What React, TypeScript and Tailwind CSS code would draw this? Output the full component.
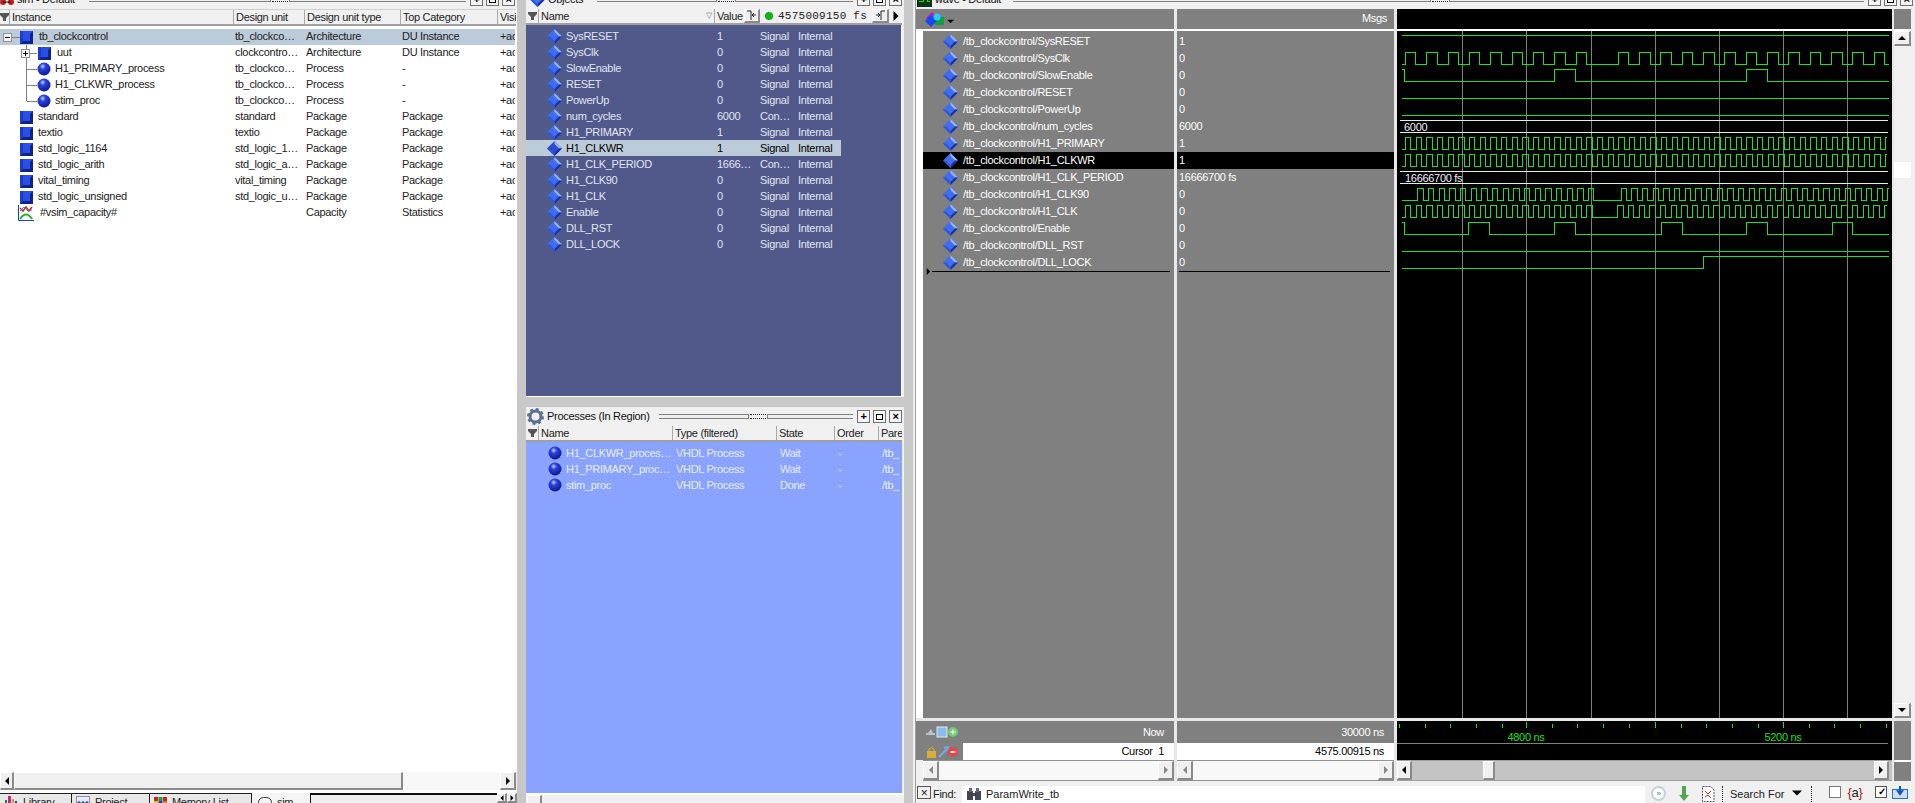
import React from 'react';

const FONT = 'font-["Liberation_Sans",sans-serif] tracking-[-0.3px]';

function Diamond({ dark = false }: { dark?: boolean }) {
  return (
    <svg width="15" height="15" viewBox="0 0 15 15" className="shrink-0">
      <polygon points="7.5,0 15,7.5 7.5,15 0,7.5" fill={dark ? '#2a4bd0' : '#3f6ff0'} />
      <polygon points="7.5,0 15,7.5 12,7.5 7.5,3" fill="#9db4f5" />
      <polygon points="15,7.5 7.5,15 7.5,12 12,7.5" fill="#1c2f9e" />
      <polygon points="0,7.5 7.5,15 7.5,12 3,7.5" fill="#2f55d8" />
    </svg>
  );
}

function Sphere() {
  return (
    <svg width="14" height="14" viewBox="0 0 14 14" className="shrink-0">
      <defs>
        <radialGradient id="ball" cx="0.4" cy="0.3" r="0.75">
          <stop offset="0" stopColor="#c8d4ff" />
          <stop offset="0.3" stopColor="#2a44e0" />
          <stop offset="1" stopColor="#0a1480" />
        </radialGradient>
      </defs>
      <circle cx="7" cy="7" r="6.5" fill="url(#ball)" />
    </svg>
  );
}

function BlueSquare() {
  return (
    <svg width="13" height="13" viewBox="0 0 13 13" className="shrink-0">
      <rect width="13" height="13" fill="#2850e8" />
      <polygon points="0,13 3,10 10,10 10,3 13,0 13,13" fill="#0f2288" />
      <polygon points="0,0 3,0 3,10 0,13" fill="#1c3cc4" />
    </svg>
  );
}

function CapacityIcon() {
  return (
    <svg width="16" height="16" viewBox="0 0 16 16" className="shrink-0">
      <path d="M0.5 0 V15.5 H16" stroke="#1a3fc0" fill="none" />
      <path d="M2 3 L5 6 L8 2 L11 6 L14 2" stroke="#e02020" strokeWidth="1.5" fill="none" />
      <path d="M2 6 L6 2 L10 6 L14 5" stroke="#20a0c0" fill="none" />
      <path d="M2 14 Q8 5 14 14" stroke="#30b030" strokeWidth="2" fill="none" />
    </svg>
  );
}

// tree connector + expand box in the instance column
function Gutter({ width, box, line, lastLine }: { width: number; box?: [number, string]; line?: boolean; lastLine?: boolean }) {
  return (
    <svg width={width} height="16" viewBox={`0 0 ${width} 16`} shapeRendering="crispEdges" className="shrink-0">
      {line && <path d={`M26.5 0 V${lastLine ? 8 : 16} M26.5 8.5 H37`} stroke="#808080" />}
      {box && (
        <g>
          {box[1] !== 'root' && <path d="M26.5 0 V16 M26.5 8.5 H37" stroke="#808080" />}
          {box[1] === 'root' && <path d="M12 8.5 H20" stroke="#808080" />}
          <rect x={box[0] + 0.5} y="4.5" width="8" height="8" fill="#f4f4f4" stroke="#909090" />
          <path d={`M${box[0] + 2} 8.5 H${box[0] + 7}`} stroke="#000" />
          {box[1] !== 'root' && <path d={`M${box[0] + 4.5} 6 V11`} stroke="#000" />}
        </g>
      )}
    </svg>
  );
}

function Tri({ dir, color = '#000', size = 8 }: { dir: 'l' | 'r' | 'u' | 'd'; color?: string; size?: number }) {
  const pts = { l: '6,0 6,8 2,4', r: '2,0 2,8 6,4', u: '0,6 8,6 4,2', d: '0,2 8,2 4,6' }[dir];
  return (
    <svg width={size} height={size} viewBox="0 0 8 8" className="shrink-0">
      <polygon points={pts} fill={color} />
    </svg>
  );
}

function WinBtn({ children }: { children: React.ReactNode }) {
  return (
    <div className="w-[13px] h-[13px] shrink-0 border border-[#707070] bg-[#f4f4f4] flex items-center justify-center text-[11px] leading-none font-bold text-black">
      {children}
    </div>
  );
}

function TitleBar({ icon, title, height, firstLine, secondLine }: { icon: React.ReactNode; title: string; height: string; firstLine: string; secondLine: string }) {
  return (
    <div className={`${height} shrink-0 overflow-hidden flex items-end bg-[#f0f0f0]`}>
      <div className="h-[19px] w-full shrink-0 flex items-center text-[11px] text-[#111]">
        {icon}
        <span className="ml-[3px] whitespace-pre">{title}</span>
        <div className={`${firstLine} h-[5px] border-y border-[#808080] border-r ml-auto`} />
        <div className="w-[16px] mx-[1px] h-[5px] border-y border-dotted border-[#222]" />
        <div className={`${secondLine} h-[5px] border-y border-[#808080] border-l`} />
        <div className="flex gap-[3px] ml-[4px] mr-[2px]">
          <WinBtn>+</WinBtn>
          <WinBtn>
            <span className="block w-[7px] h-[6px] border border-black" />
          </WinBtn>
          <WinBtn>×</WinBtn>
        </div>
      </div>
    </div>
  );
}

function Btn({ className, children }: { className: string; children?: React.ReactNode }) {
  return (
    <div className={`${className} shrink-0 flex items-center justify-center bg-[#f0f0f0] border-t border-l border-t-white border-l-white border-b-2 border-r-2 border-b-[#8a8a8a] border-r-[#8a8a8a]`}>
      {children}
    </div>
  );
}

function HeaderCell({ w, children }: { w: string; children: React.ReactNode }) {
  return (
    <div className={`${w} shrink-0 h-full flex items-center overflow-hidden whitespace-nowrap pl-[2px] border-l border-[#a8a8a8]`}>
      {children}
    </div>
  );
}

function Collapse({ className }: { className: string }) {
  return (
    <div className={`${className} shrink-0 flex justify-center`}>
      <svg width="9" height="8" viewBox="0 0 9 8">
        <polygon points="0,0 9,0 9,2 6,5 6,8 3,8 3,5 0,2" fill="#555" />
      </svg>
    </div>
  );
}

const instances = [
  { name: 'tb_clockcontrol', unit: 'tb_clockco…', type: 'Architecture', cat: 'DU Instance', kind: 'root' },
  { name: 'uut', unit: 'clockcontro…', type: 'Architecture', cat: 'DU Instance', kind: 'child' },
  { name: 'H1_PRIMARY_process', unit: 'tb_clockco…', type: 'Process', cat: '-', kind: 'proc' },
  { name: 'H1_CLKWR_process', unit: 'tb_clockco…', type: 'Process', cat: '-', kind: 'proc' },
  { name: 'stim_proc', unit: 'tb_clockco…', type: 'Process', cat: '-', kind: 'last' },
  { name: 'standard', unit: 'standard', type: 'Package', cat: 'Package', kind: 'pkg' },
  { name: 'textio', unit: 'textio', type: 'Package', cat: 'Package', kind: 'pkg' },
  { name: 'std_logic_1164', unit: 'std_logic_1…', type: 'Package', cat: 'Package', kind: 'pkg' },
  { name: 'std_logic_arith', unit: 'std_logic_a…', type: 'Package', cat: 'Package', kind: 'pkg' },
  { name: 'vital_timing', unit: 'vital_timing', type: 'Package', cat: 'Package', kind: 'pkg' },
  { name: 'std_logic_unsigned', unit: 'std_logic_u…', type: 'Package', cat: 'Package', kind: 'pkg' },
  { name: '#vsim_capacity#', unit: '', type: 'Capacity', cat: 'Statistics', kind: 'cap' },
];

function InstanceName({ kind, name }: { kind: string; name: string }) {
  if (kind === 'root')
    return (
      <>
        <Gutter width={20} box={[3, 'root']} />
        <BlueSquare />
        <span className="ml-[6px] mb-[2px]">{name}</span>
      </>
    );
  if (kind === 'child')
    return (
      <>
        <Gutter width={38} box={[21, 'plus']} />
        <BlueSquare />
        <span className="ml-[6px] mb-[2px]">{name}</span>
      </>
    );
  if (kind === 'proc' || kind === 'last')
    return (
      <>
        <Gutter width={37} line lastLine={kind === 'last'} />
        <Sphere />
        <span className="ml-[4px] mb-[2px]">{name}</span>
      </>
    );
  if (kind === 'cap')
    return (
      <>
        <div className="w-[18px] shrink-0" />
        <CapacityIcon />
        <span className="ml-[6px] mb-[2px]">{name}</span>
      </>
    );
  return (
    <>
      <div className="w-[20px] shrink-0" />
      <BlueSquare />
      <span className="ml-[5px] mb-[2px]">{name}</span>
    </>
  );
}

function TabIcon({ name }: { name: string }) {
  if (name === 'Library')
    return (
      <svg width="14" height="13" viewBox="0 0 14 13" className="shrink-0">
        <rect x="1" y="4" width="2" height="9" fill="#208040" />
        <rect x="4" y="0" width="3" height="13" fill="#d02090" />
        <rect x="8" y="3" width="2" height="10" fill="#d0a020" />
        <rect x="11" y="5" width="2" height="8" fill="#2040c0" />
      </svg>
    );
  if (name === 'Project')
    return (
      <svg width="14" height="13" viewBox="0 0 14 13" className="shrink-0">
        <rect x=".5" y=".5" width="13" height="12" fill="#e8ecff" stroke="#333" strokeDasharray="1 1" />
        <path d="M3 5 V9 M1 7 H5 M7 5 V9 M5 7 H9 M11 5 V9 M9 7 H13" stroke="#1020a0" />
      </svg>
    );
  return (
    <svg width="13" height="12" viewBox="0 0 13 12" className="shrink-0">
      <rect x="0" y="0" width="4" height="4" fill="#d02020" />
      <rect x="4.5" y="0" width="4" height="4" fill="#20a040" />
      <rect x="9" y="0" width="4" height="4" fill="#d02020" />
      <rect x="0" y="4" width="4" height="4" fill="#e8c820" />
      <rect x="4.5" y="4" width="4" height="4" fill="#2040d0" />
      <rect x="9" y="4" width="4" height="4" fill="#e08020" />
      <rect x="0" y="8" width="13" height="4" fill="#405080" />
    </svg>
  );
}

function SimPanel() {
  return (
    <div className="w-[517px] shrink-0 flex flex-col bg-white">
      <TitleBar
        height="h-[9px]"
        title="sim - Default"
        firstLine="w-[182px]"
        secondLine="w-[177px]"
        icon={
          <svg width="14" height="10" viewBox="0 0 14 10" className="shrink-0">
            <circle cx="3" cy="7" r="3" fill="#c02020" />
            <circle cx="11" cy="7" r="3" fill="#c02020" />
            <path d="M3 7 H11" stroke="#111" />
          </svg>
        }
      />
      <div className="h-[17px] shrink-0 flex items-center text-[11px] text-[#222] bg-[#f0f0f0] border-t border-b-2 border-t-[#d0d0d0] border-b-[#a0a0a0] mr-[1px]">
        <Collapse className="w-[9px]" />
        <HeaderCell w="w-[224px]">Instance</HeaderCell>
        <HeaderCell w="w-[71px]">Design unit</HeaderCell>
        <HeaderCell w="w-[96px]">Design unit type</HeaderCell>
        <HeaderCell w="w-[97px]">Top Category</HeaderCell>
        <HeaderCell w="w-[19px]">Visil</HeaderCell>
      </div>
      <div className="flex-1 min-h-0 pt-[3px] text-[11px] text-[#222] overflow-hidden">
        {instances.map((r, i) => (
          <div key={r.name} className={`h-[16px] flex items-center whitespace-nowrap w-[515px] ${i === 0 ? 'bg-[#bccbd9]' : ''}`}>
            <div className="w-[235px] shrink-0 flex items-center h-full">
              <InstanceName kind={r.kind} name={r.name} />
            </div>
            <div className="w-[71px] shrink-0 pb-[2px]">{r.unit}</div>
            <div className="w-[96px] shrink-0 pb-[2px]">{r.type}</div>
            <div className="w-[98px] shrink-0 pb-[2px]">{r.cat}</div>
            <div className="w-[15px] shrink-0 overflow-hidden pb-[2px]">+acc</div>
          </div>
        ))}
      </div>
      <div className="h-[18px] shrink-0 flex bg-[#f0f0f0] mb-[3px]">
        <Btn className="w-[14px] h-full"><Tri dir="l" /></Btn>
        <Btn className="w-[389px] h-full" />
        <div className="w-[97px] bg-[#f8f8f8]" />
        <Btn className="w-[16px] h-full"><Tri dir="r" /></Btn>
      </div>
      <div className="h-[10px] shrink-0 overflow-hidden flex items-start bg-[#f0f0f0] text-[11px] text-[#222]">
        {[
          { t: 'Library', w: 'w-[72px]' },
          { t: 'Project', w: 'w-[78px]' },
          { t: 'Memory List', w: 'w-[102px]' },
        ].map((tab) => (
          <div key={tab.t} className={`${tab.w} h-[18px] shrink-0 flex items-center gap-[5px] pl-[4px] border-t border-r border-[#222] bg-[#e8e8e8] whitespace-nowrap`}>
            <TabIcon name={tab.t} />
            {tab.t}
          </div>
        ))}
        <div className="w-[58px] h-[18px] shrink-0 flex items-center gap-[5px] pl-[6px] bg-[#f4f4f4]">
          <span className="w-[14px] h-[11px] block border border-[#333] rounded-md" />
          sim
        </div>
        <div className="w-[187px] h-full border-t-2 border-l border-[#111] bg-[#f0f0f0]" />
        <Btn className="w-[10px] h-full"><Tri dir="l" size={6} /></Btn>
        <Btn className="w-[10px] h-full"><Tri dir="r" size={6} /></Btn>
      </div>
    </div>
  );
}

const objects = [
  ['SysRESET', '1', 'Signal'],
  ['SysClk', '0', 'Signal'],
  ['SlowEnable', '0', 'Signal'],
  ['RESET', '0', 'Signal'],
  ['PowerUp', '0', 'Signal'],
  ['num_cycles', '6000', 'Con…'],
  ['H1_PRIMARY', '1', 'Signal'],
  ['H1_CLKWR', '1', 'Signal'],
  ['H1_CLK_PERIOD', '1666…', 'Con…'],
  ['H1_CLK90', '0', 'Signal'],
  ['H1_CLK', '0', 'Signal'],
  ['Enable', '0', 'Signal'],
  ['DLL_RST', '0', 'Signal'],
  ['DLL_LOCK', '0', 'Signal'],
];

const processes = [
  ['H1_CLKWR_proces…', 'Wait'],
  ['H1_PRIMARY_proc…', 'Wait'],
  ['stim_proc', 'Done'],
];

function CenterPanels() {
  return (
    <div className="w-[378px] shrink-0 flex flex-col bg-[#f0f0f0]">
      <TitleBar
        height="h-[9px]"
        title="Objects"
        firstLine="w-[120px]"
        secondLine="w-[118px]"
        icon={
          <div className="ml-[4px] shrink-0">
            <Diamond />
          </div>
        }
      />
      <div className="h-[16px] shrink-0 flex items-center text-[11px] text-[#222] border-b-2 border-[#a0a0a0] w-[376px]">
        <Collapse className="w-[11px] ml-[1px]" />
        <HeaderCell w="w-[176px]">
          <span className="flex-1">Name</span>
          <span className="text-[8px] text-[#777] mr-[2px]">▽</span>
        </HeaderCell>
        <HeaderCell w="w-[30px]">Value</HeaderCell>
        <Btn className="w-[16px] h-[14px]">
          <svg width="11" height="11" viewBox="0 0 11 11"><path d="M1 1 H5 V10 M10 5 H6 M6 5 L8 3 M6 5 L8 7" stroke="#222" fill="none" /></svg>
        </Btn>
        <div className="w-[112px] shrink-0 flex items-center pl-[5px] gap-[5px] font-['Liberation_Mono',monospace] text-[#222] text-[11px] tracking-[0.25px] whitespace-pre overflow-hidden">
          <span className="w-[8px] h-[8px] rounded-full bg-[#12b012] shrink-0" />
          4575009150 fs
        </div>
        <Btn className="w-[17px] h-[14px]">
          <svg width="11" height="11" viewBox="0 0 11 11"><path d="M10 1 H6 V10 M1 5 H5 M5 5 L3 3 M5 5 L3 7" stroke="#222" fill="none" /></svg>
        </Btn>
        <div className="ml-[2px]"><Tri dir="r" size={10} /></div>
      </div>
      <div className="h-[372px] shrink-0 w-[376px] bg-[#50598a] border-b border-r border-white text-[11px] text-[#e2e5f2] pt-[3px] overflow-hidden">
        {objects.map((o) => {
          const sel = o[0] === 'H1_CLKWR';
          return (
            <div key={o[0]} className={`h-[16px] w-[315px] flex items-center whitespace-nowrap ${sel ? 'bg-[#bccbd9] text-black' : ''}`}>
              <div className="w-[21px] shrink-0" />
              <Diamond dark={sel} />
              <span className="ml-[4px] w-[151px] shrink-0">{o[0]}</span>
              <span className="w-[43px] shrink-0">{o[1]}</span>
              <span className="w-[38px] shrink-0">{o[2]}</span>
              <span>Internal</span>
            </div>
          );
        })}
      </div>
      <div className="h-[10px] shrink-0 bg-[#c8c8c8]" />
      <TitleBar
        height="h-[19px]"
        title="Processes (In Region)"
        firstLine="w-[90px]"
        secondLine="w-[86px]"
        icon={
          <svg width="17" height="17" viewBox="0 0 17 17" className="ml-[1px] shrink-0">
            <circle cx="8.5" cy="8.5" r="5.5" fill="none" stroke="#5a7090" strokeWidth="3" />
            <circle cx="8.5" cy="8.5" r="7.5" fill="none" stroke="#5a7090" strokeWidth="2" strokeDasharray="3 2.9" />
          </svg>
        }
      />
      <div className="h-[16px] shrink-0 flex items-center text-[11px] text-[#222] border-b-2 border-[#a0a0a0] w-[376px]">
        <Collapse className="w-[11px] ml-[1px]" />
        <HeaderCell w="w-[134px]">Name</HeaderCell>
        <HeaderCell w="w-[104px]">Type (filtered)</HeaderCell>
        <HeaderCell w="w-[58px]">State</HeaderCell>
        <HeaderCell w="w-[44px]">Order</HeaderCell>
        <HeaderCell w="w-[24px]">Pare</HeaderCell>
      </div>
      <div className="flex-1 min-h-0 w-[376px] bg-[#8aa3fe] text-[11px] text-[#e8edff] pt-[3px]">
        {processes.map((p) => (
          <div key={p[0]} className="h-[16px] flex items-center whitespace-nowrap overflow-hidden">
            <div className="w-[22px] shrink-0" />
            <Sphere />
            <span className="ml-[4px] w-[110px] shrink-0 overflow-hidden">{p[0]}</span>
            <span className="w-[104px] shrink-0">VHDL Process</span>
            <span className="w-[58px] shrink-0">{p[1]}</span>
            <span className="w-[44px] shrink-0">-</span>
            <span>/tb_</span>
          </div>
        ))}
      </div>
      <div className="h-[10px] shrink-0 border-t-2 border-white overflow-hidden">
        <Btn className="w-[15px] h-[14px] ml-[1px]" />
      </div>
    </div>
  );
}

const waveNames = ['SysRESET', 'SysClk', 'SlowEnable', 'RESET', 'PowerUp', 'num_cycles', 'H1_PRIMARY', 'H1_CLKWR', 'H1_CLK_PERIOD', 'H1_CLK90', 'H1_CLK', 'Enable', 'DLL_RST', 'DLL_LOCK'];
const waveValues = ['1', '0', '0', '0', '0', '6000', '1', '1', '16666700 fs', '0', '0', '0', '0', '0'];

// positions below were read off a 3x crop, so they're in crop units
type Range = [number, number];
const clk = (start: number, period: number, width: number, count: number): Range[] =>
  Array.from({ length: count }, (_, k): Range => [start + k * period, start + k * period + width]);
const px = (z: number) => Math.round(z / 3 - 2) + 0.5;

function trace(highs: Range[], hi: number, lo: number, end = 1479, from = 18) {
  let d = '';
  let first = true;
  const h = hi + 0.5;
  const l = lo + 0.5;
  if (highs[0][0] <= from) d = `M${px(from)} ${h}`;
  else d = `M${px(from)} ${l}`;
  for (const [a, b] of highs) {
    if (!(first && a <= from)) d += ` H${px(a)} V${h}`;
    first = false;
    if (b >= end) {
      d += ` H${px(end)}`;
      return d;
    }
    d += ` H${px(b)} V${l}`;
  }
  return d + ` H${px(end)}`;
}

const GRID = [65.5, 129.5, 194.5, 258.5, 322.5, 386.5, 450.5];
const GREEN = '#1fe01f';

const traces = [
  `M${px(18)} 4.5 H${px(1479)}`,
  trace([...clk(30, 64, 31, 9), ...clk(668, 64, 32, 13)], 21, 33),
  trace([[18, 28], [476, 540], [1054, 1117]], 38, 50),
  `M${px(18)} 67.5 H${px(1479)}`,
  `M${px(18)} 84.5 H${px(1479)}`,
  trace(clk(30, 32, 16, 46), 106, 118, 1474),
  trace(clk(30, 32, 16, 46), 123, 135, 1474),
  trace([...clk(67, 32, 16, 17), ...clk(677, 32, 16, 26)], 157, 169),
  trace([...clk(30, 32, 16, 18), ...clk(667, 32, 16, 26)], 174, 186, 1474),
  trace([[18, 28], [220, 283], [476, 540], [797, 860], [1054, 1117], [1310, 1372]], 191, 203),
  `M${px(18)} 220.5 H${px(1479)}`,
  `M${px(18)} 237.5 H${px(925)} V225.5 H${px(1479)}`,
];

function WaveCanvas() {
  return (
    <svg width="495" height="687" viewBox="0 0 495 687" shapeRendering="crispEdges" className="block">
      {GRID.map((x) => (
        <path key={x} d={`M${x} 0 V687`} stroke="#808080" />
      ))}
      {traces.map((d, i) => (
        <path key={i} d={d} stroke={GREEN} fill="none" />
      ))}
      {[89, 140].map((y) => (
        <path key={y} d={`M3 ${y + 0.5} H491 M3 ${y + 12.5} H491`} stroke="#dcf5dc" />
      ))}
      <text x="7" y="100" fill="#eef" fontSize="11" fontFamily="Liberation Sans" shapeRendering="auto">6000</text>
      <text x="8" y="151" fill="#eef" fontSize="11" fontFamily="Liberation Sans" shapeRendering="auto">16666700 fs</text>
    </svg>
  );
}

const TICKS = [2.5, 28.5, 53.5, 79.5, 105.5, 129.5, 155.5, 180.5, 206.5, 232.5, 258.5, 284.5, 309.5, 335.5, 361.5, 386.5, 412.5, 437.5, 463.5, 489.5];
const MAJOR = [129.5, 258.5, 386.5];

function Ruler() {
  return (
    <svg width="495" height="39" viewBox="0 0 495 39" shapeRendering="crispEdges" className="block">
      {TICKS.map((x) => (
        <path key={x} d={`M${x} ${MAJOR.includes(x) ? 1 : 3} V7`} stroke={GREEN} />
      ))}
      <text x="129" y="20" textAnchor="middle" fill={GREEN} fontSize="11" fontFamily="Liberation Sans">4800 ns</text>
      <text x="386" y="20" textAnchor="middle" fill={GREEN} fontSize="11" fontFamily="Liberation Sans">5200 ns</text>
      <path d="M0 22.5 H491" stroke="#808080" />
    </svg>
  );
}

function SmallHScroll({ w }: { w: string }) {
  return (
    <div className={`${w} h-[21px] shrink-0 flex border-y border-[#909090] bg-[#f8f8f8]`}>
      <Btn className="w-[16px] h-full"><Tri dir="l" color="#888" /></Btn>
      <div className="flex-1" />
      <Btn className="w-[16px] h-full"><Tri dir="r" color="#888" /></Btn>
    </div>
  );
}

function WavePanel() {
  return (
    <div className="flex-1 min-w-0 flex flex-col border-l border-[#a0a0a0] bg-[#f0f0f0] text-[11px]">
      <TitleBar
        height="h-[9px]"
        title="wave - Default"
        firstLine="w-[418px]"
        secondLine="w-[415px]"
        icon={
          <svg width="15" height="14" viewBox="0 0 15 14" shapeRendering="crispEdges" className="ml-[1px] shrink-0">
            <rect width="15" height="14" fill="#083818" stroke="#111" />
            <path d="M2 8 H6 V4 H10 V8 H13" stroke="#20e020" fill="none" />
          </svg>
        }
      />
      {/* msgs header + signal rows + waves */}
      <div className="flex-1 min-h-0 flex">
        <div className="w-[258px] shrink-0 flex flex-col">
          <div className="h-[22px] shrink-0 flex items-center bg-[#808080] border-b-2 border-white pl-[9px]">
            <svg width="20" height="16" viewBox="0 0 20 16" className="shrink-0">
              <polygon points="1,7 7,1 11,5 5,9" fill="#b020c0" />
              <rect x="10" y="6" width="9" height="8" fill="#10a040" />
              <polygon points="0,10 6,4 12,10 6,16" fill="#1848f0" />
              <circle cx="12" cy="6" r="3.5" fill="#20d0f0" />
            </svg>
            <div className="ml-[2px] mt-[4px]"><Tri dir="d" size={7} /></div>
          </div>
          <div className="flex-1 min-h-0 flex">
            <div className="w-[7px] shrink-0 bg-white" />
            <div className="flex-1 min-w-0 bg-[#808080] pt-[2px] text-white">
              {waveNames.map((n) => (
                <div key={n} className={`h-[17px] flex items-center whitespace-nowrap ${n === 'H1_CLKWR' ? 'bg-black' : ''}`}>
                  <div className="w-[20px] shrink-0" />
                  <Diamond />
                  <span className="ml-[5px]">/tb_clockcontrol/{n}</span>
                </div>
              ))}
              <div className="flex items-center h-[3px] pl-[2px] -mt-[1px]">
                <Tri dir="r" size={7} />
                <div className="flex-1 h-[1px] bg-black mr-[4px]" />
              </div>
            </div>
          </div>
          <div className="h-[3px] shrink-0 bg-[#e8e8e8]" />
          <div className="h-[22px] shrink-0 bg-[#808080] text-white flex items-center pl-[9px] pr-[10px]">
            <svg width="34" height="12" viewBox="0 0 34 12" className="shrink-0">
              <path d="M1 9 H10 V7 H1 Z M3 7 L6 3 L8 7" fill="#b8c4d4" />
              <rect x="12" y="1" width="10" height="10" fill="#8cbcea" stroke="#dde8f4" />
              <circle cx="28" cy="6" r="5" fill="#78c878" />
              <path d="M25.5 6 H30.5 M28 3.5 V8.5" stroke="#fff" />
            </svg>
            <span className="ml-auto">Now</span>
          </div>
          <div className="h-[17px] shrink-0 flex">
            <div className="w-[47px] bg-[#808080] flex items-center pl-[11px] shrink-0">
              <svg width="32" height="12" viewBox="0 0 32 12" className="shrink-0">
                <rect x="0" y="5" width="9" height="7" fill="#dcac38" />
                <path d="M2 5 V3 Q4.5 0 7 3 V5" stroke="#dcac38" fill="none" />
                <path d="M12 11 L19 4 M17 2 L21 1 L19 5" stroke="#7aa8e0" strokeWidth="2" fill="none" />
                <circle cx="26" cy="6" r="5" fill="#e04848" />
                <path d="M23.5 6 H28.5" stroke="#fff" strokeWidth="1.5" />
              </svg>
            </div>
            <div className="flex-1 bg-white text-black text-right pr-[10px] leading-[17px] whitespace-pre">Cursor  1</div>
          </div>
          <SmallHScroll w="w-[251px] ml-[7px]" />
        </div>

        <div className="w-[3px] shrink-0 bg-[#e8e8e8]" />

        <div className="w-[217px] shrink-0 flex flex-col">
          <div className="h-[22px] shrink-0 bg-[#808080] border-b-2 border-white text-white text-right pr-[7px] leading-[18px]">Msgs</div>
          <div className="flex-1 min-h-0 bg-[#808080] pt-[2px] text-white">
            {waveValues.map((v, i) => (
              <div key={i} className={`h-[17px] flex items-center pl-[2px] ${i === 7 ? 'bg-black' : ''}`}>{v}</div>
            ))}
            <div className="h-[1px] bg-black ml-[2px] mr-[4px]" />
          </div>
          <div className="h-[3px] shrink-0 bg-[#e8e8e8]" />
          <div className="h-[22px] shrink-0 bg-[#808080] text-white flex items-center justify-end pr-[10px]">30000 ns</div>
          <div className="h-[17px] shrink-0 bg-white text-black text-right pr-[10px] leading-[17px]">4575.00915 ns</div>
          <SmallHScroll w="w-[217px]" />
        </div>

        <div className="w-[3px] shrink-0 bg-[#e8e8e8]" />

        <div className="w-[495px] shrink-0 flex flex-col">
          <div className="h-[22px] shrink-0 bg-black border-b-2 border-white" />
          <div className="flex-1 min-h-0 bg-black overflow-hidden"><WaveCanvas /></div>
          <div className="h-[3px] shrink-0 bg-[#e8e8e8]" />
          <div className="h-[39px] shrink-0 bg-black overflow-hidden"><Ruler /></div>
          <div className="h-[21px] shrink-0 flex bg-[#c4c4c4] border-y border-[#a0a0a0] pr-[3px]">
            <Btn className="w-[15px] h-full"><Tri dir="l" /></Btn>
            <div className="w-[71px] shrink-0" />
            <Btn className="w-[12px] h-full" />
            <div className="flex-1" />
            <Btn className="w-[15px] h-full"><Tri dir="r" /></Btn>
          </div>
        </div>

        <div className="w-[2px] shrink-0 bg-[#e8e8e8]" />

        <div className="w-[17px] shrink-0 flex flex-col">
          <div className="h-[22px] shrink-0 bg-[#808080] border-b-2 border-white" />
          <div className="flex-1 min-h-0 flex flex-col bg-[#f0f0f0]">
            <Btn className="w-[17px] h-[15px]"><Tri dir="u" /></Btn>
            <div className="h-[116px] shrink-0" />
            <div className="h-[16px] shrink-0 bg-white" />
            <div className="flex-1" />
            <Btn className="w-[17px] h-[15px]"><Tri dir="d" /></Btn>
          </div>
          <div className="h-[3px] shrink-0 bg-[#e8e8e8]" />
          <div className="h-[39px] shrink-0 bg-[#808080]" />
          <div className="h-[21px] shrink-0 bg-[#808080] border-t-2 border-white" />
        </div>
        <div className="flex-1 min-w-0" />
      </div>

      {/* find bar */}
      <div className="h-[22px] shrink-0 overflow-hidden flex items-start pt-[5px] pl-[1px] text-[#222]">
        <div className="w-[14px] h-[13px] border border-[#555] flex items-center justify-center text-[12px] leading-none shrink-0">×</div>
        <span className="ml-[2px] w-[29px] shrink-0">Find:</span>
        <div className="w-[683px] h-[17px] shrink-0 bg-white flex items-center pl-[4px]">
          <svg width="16" height="13" viewBox="0 0 16 13" className="shrink-0">
            <rect x="1" y="3" width="6" height="9" fill="#445" />
            <rect x="9" y="3" width="6" height="9" fill="#445" />
            <rect x="3" y="0" width="3" height="4" fill="#667" />
            <rect x="10" y="0" width="3" height="4" fill="#667" />
            <rect x="6" y="5" width="4" height="3" fill="#445" />
          </svg>
          <span className="ml-[4px] tracking-normal">ParamWrite_tb</span>
        </div>
        <div className="ml-[6px] w-[15px] h-[15px] rounded-full border-2 border-[#c0d0e0] bg-white flex items-center justify-center shrink-0 text-[8px] text-[#4070c0] leading-none">»</div>
        <svg width="16" height="16" viewBox="0 0 16 16" className="ml-[10px] shrink-0">
          <path d="M6 0 H10 V9 H13 L8 15 L3 9 H6 Z" fill="#50a850" />
        </svg>
        <svg width="16" height="16" viewBox="0 0 16 16" className="ml-[8px] shrink-0">
          <path d="M2.5 .5 H11 L14 4 V15.5 H2.5 Z" fill="#fff" stroke="#555" strokeDasharray="2 1" />
          <path d="M5 5 L8 8 L11 5 M5 11 L8 9 L11 12" stroke="#d02020" fill="none" />
        </svg>
        <div className="ml-[6px] h-[16px] border-l border-dotted border-[#222]" />
        <span className="ml-[7px] shrink-0 tracking-normal">Search For</span>
        <div className="ml-[8px] mt-[2px]"><Tri dir="d" size={10} /></div>
        <div className="ml-[9px] h-[16px] border-l border-dotted border-[#222]" />
        <div className="ml-[17px] w-[12px] h-[12px] border border-[#777] bg-white shrink-0" />
        <span className="ml-[6px] shrink-0 text-[13px] leading-[13px] text-[#222]"><span className="text-[#a02020]">{'{'}</span>a<span className="text-[#a02020]">{'}'}</span></span>
        <div className="ml-[13px] w-[12px] h-[12px] border border-[#555] bg-white shrink-0 flex items-center justify-center text-[10px] leading-none font-bold text-black">✓</div>
        <svg width="16" height="13" viewBox="0 0 16 13" className="ml-[5px] shrink-0">
          <rect x=".5" y="3.5" width="15" height="9" fill="#cfe0f5" stroke="#2a70c8" />
          <path d="M8 0 V7 M5 4 L8 8 L11 4" stroke="#1050c0" strokeWidth="2" fill="none" />
        </svg>
      </div>
    </div>
  );
}

export default function App() {
  return (
    <div className={`w-[1915px] h-[803px] overflow-hidden flex bg-[#c8c8c8] ${FONT}`}>
      <SimPanel />
      <div className="w-[9px] shrink-0 bg-[#c8c8c8]" />
      <CenterPanels />
      <div className="w-[9px] shrink-0 bg-[#c8c8c8]" />
      <div className="w-[2px] shrink-0 bg-[#f0f0f0]" />
      <WavePanel />
    </div>
  );
}
